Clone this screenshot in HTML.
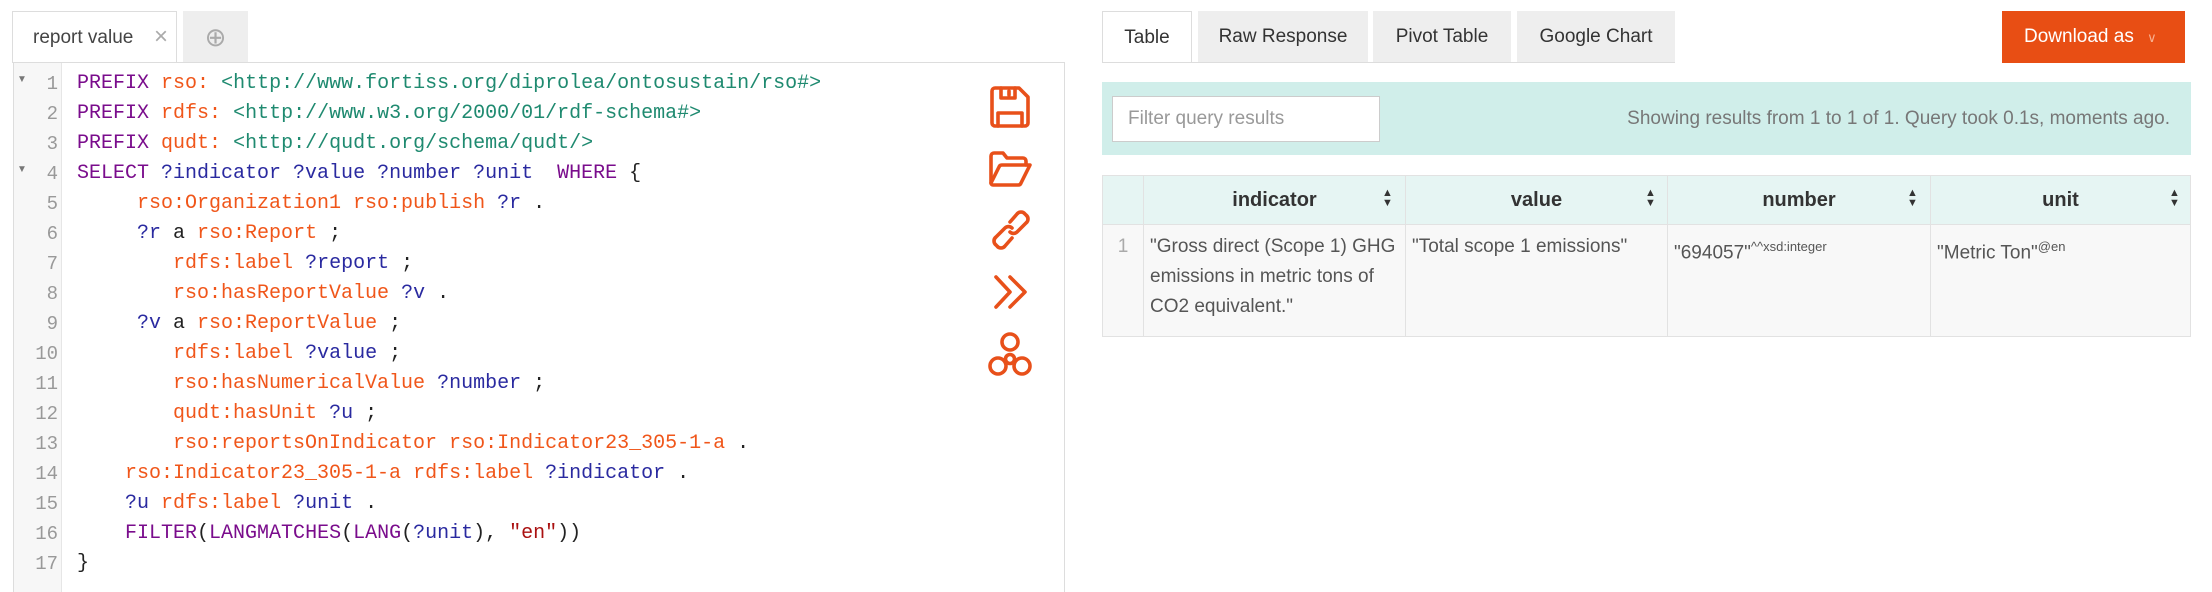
<!DOCTYPE html>
<html><head><meta charset="utf-8"><style>
*{box-sizing:border-box;margin:0;padding:0}
body{width:2212px;height:580px;background:#fff;position:relative;overflow:hidden;font-family:"Liberation Sans",sans-serif;color:#333}
.abs{position:absolute}
.tab{position:absolute;top:11px;height:52px;font-size:19px;line-height:52px;text-align:center}
.code{position:absolute;left:13px;top:62px;width:1052px;height:530px;border:1px solid #ddd;border-bottom:none}
.gut{position:absolute;left:0;top:0;width:48px;height:100%;background:#f7f7f7;border-right:1px solid #e6e6e6}
.ln{position:absolute;left:0;width:44px;text-align:right;font-family:"Liberation Mono",monospace;font-size:19px;color:#999;height:30px;line-height:30px}
.cl{position:absolute;left:63px;font-family:"Liberation Mono",monospace;font-size:20px;height:30px;line-height:30px;white-space:pre;color:#222}
.k{color:#7a0c8c}.p{color:#f0561a}.u{color:#1f8a70}.v{color:#2a2aa0}.s{color:#a11}
.fold{position:absolute;left:3px;font-size:10px;color:#777}
svg.i{position:absolute;fill:none;stroke:#e8501a;stroke-width:3.6;stroke-linecap:round;stroke-linejoin:round}
th,td{border:1px solid #e2e2e2}
.so{position:absolute;top:188px;font-size:11px;line-height:10px;color:#333}
</style></head><body>
<div class="tab" style="left:12px;width:165px;border:1px solid #ddd;border-bottom:none;background:#fff;color:#444;text-align:left;padding-left:20px">report value <span style="color:#aaa;font-size:24px;position:absolute;right:8px;top:-1px">×</span></div>
<div class="tab" style="left:183px;width:65px;background:#eee;color:#aaa;font-size:26px">⊕</div>
<div class="code">
<div class="gut"></div>
<div class="fold" style="top:11px">▼</div><div class="fold" style="top:101px">▼</div>
<div class="ln" style="top:6px">1</div><div class="ln" style="top:36px">2</div><div class="ln" style="top:66px">3</div><div class="ln" style="top:96px">4</div><div class="ln" style="top:126px">5</div><div class="ln" style="top:156px">6</div><div class="ln" style="top:186px">7</div><div class="ln" style="top:216px">8</div><div class="ln" style="top:246px">9</div><div class="ln" style="top:276px">10</div><div class="ln" style="top:306px">11</div><div class="ln" style="top:336px">12</div><div class="ln" style="top:366px">13</div><div class="ln" style="top:396px">14</div><div class="ln" style="top:426px">15</div><div class="ln" style="top:456px">16</div><div class="ln" style="top:486px">17</div>
<div class="cl" style="top:6px"><span class="k">PREFIX</span> <span class="p">rso:</span> <span class="u">&lt;http://www.fortiss.org/diprolea/ontosustain/rso#&gt;</span></div>
<div class="cl" style="top:36px"><span class="k">PREFIX</span> <span class="p">rdfs:</span> <span class="u">&lt;http://www.w3.org/2000/01/rdf-schema#&gt;</span></div>
<div class="cl" style="top:66px"><span class="k">PREFIX</span> <span class="p">qudt:</span> <span class="u">&lt;http://qudt.org/schema/qudt/&gt;</span></div>
<div class="cl" style="top:96px"><span class="k">SELECT</span> <span class="v">?indicator ?value ?number ?unit</span>  <span class="k">WHERE</span> {</div>
<div class="cl" style="top:126px">     <span class="p">rso:Organization1 rso:publish</span> <span class="v">?r</span> .</div>
<div class="cl" style="top:156px">     <span class="v">?r</span> a <span class="p">rso:Report</span> ;</div>
<div class="cl" style="top:186px">        <span class="p">rdfs:label</span> <span class="v">?report</span> ;</div>
<div class="cl" style="top:216px">        <span class="p">rso:hasReportValue</span> <span class="v">?v</span> .</div>
<div class="cl" style="top:246px">     <span class="v">?v</span> a <span class="p">rso:ReportValue</span> ;</div>
<div class="cl" style="top:276px">        <span class="p">rdfs:label</span> <span class="v">?value</span> ;</div>
<div class="cl" style="top:306px">        <span class="p">rso:hasNumericalValue</span> <span class="v">?number</span> ;</div>
<div class="cl" style="top:336px">        <span class="p">qudt:hasUnit</span> <span class="v">?u</span> ;</div>
<div class="cl" style="top:366px">        <span class="p">rso:reportsOnIndicator rso:Indicator23_305-1-a</span> .</div>
<div class="cl" style="top:396px">    <span class="p">rso:Indicator23_305-1-a rdfs:label</span> <span class="v">?indicator</span> .</div>
<div class="cl" style="top:426px">    <span class="v">?u</span> <span class="p">rdfs:label</span> <span class="v">?unit</span> .</div>
<div class="cl" style="top:456px">    <span class="k">FILTER</span>(<span class="k">LANGMATCHES</span>(<span class="k">LANG</span>(<span class="v">?unit</span>), <span class="s">"en"</span>))</div>
<div class="cl" style="top:486px">}</div>
</div>
<svg class="i" style="left:988px;top:85px" width="44" height="44" viewBox="0 0 44 44"><path d="M4 6a3 3 0 0 1 3-3h24l9 9v26a3 3 0 0 1-3 3H7a3 3 0 0 1-3-3z"/><path d="M13 3v10h14V3M21 6v4M10 41V28h24v13"/></svg>
<svg class="i" style="left:988px;top:150px" width="46" height="38" viewBox="0 0 46 38"><path d="M3 33V6a3 3 0 0 1 3-3h9l4 5h16a3 3 0 0 1 3 3v4"/><path d="M3 33l8-16a3 3 0 0 1 3-2h28l-9 18a3 3 0 0 1-3 2H5a2 2 0 0 1-2-2z"/></svg>
<svg class="i" style="left:990px;top:208px" width="42" height="44" viewBox="0 0 42 44"><path d="M20 14l7-8a5 5 0 0 1 8 0l1 1a5 5 0 0 1 0 8l-9 9a5 5 0 0 1-7 0"/><path d="M22 30l-7 8a5 5 0 0 1-8 0l-1-1a5 5 0 0 1 0-8l9-9a5 5 0 0 1 7 0"/></svg>
<svg class="i" style="left:992px;top:274px" width="38" height="38" viewBox="0 0 38 38"><path d="M4 3l14 15L4 33M18 3l15 15L18 33"/></svg>
<svg class="i" style="left:987px;top:331px" width="46" height="48" viewBox="0 0 46 48"><circle cx="23" cy="11" r="8"/><circle cx="11" cy="35" r="8"/><circle cx="35" cy="35" r="8"/><circle cx="23" cy="28" r="4.5"/></svg>

<div class="tab" style="left:1102px;width:90px;border:1px solid #ddd;border-bottom:none;background:#fff">Table</div>
<div class="tab" style="left:1198px;width:170px;background:#eee">Raw Response</div>
<div class="tab" style="left:1373px;width:138px;background:#eee">Pivot Table</div>
<div class="tab" style="left:1517px;width:158px;background:#eee">Google Chart</div>
<div class="abs" style="left:1102px;top:62px;width:573px;height:1px;background:#ddd"></div>
<div class="tab" style="left:2002px;width:183px;background:#e84e14;color:#fff;font-size:19px;text-align:left;padding-left:22px">Download as <span style="font-size:13px;color:#f8b090;margin-left:8px">∨</span></div>
<div class="abs" style="left:1102px;top:82px;width:1089px;height:73px;background:#d0eeea"></div>
<div class="abs" style="left:1112px;top:96px;width:268px;height:46px;background:#fff;border:1px solid #ccc;font-size:19px;color:#999;line-height:44px;padding-left:15px">Filter query results</div>
<div class="abs" style="right:42px;top:96px;height:46px;line-height:46px;font-size:19px;color:#777">Showing results from 1 to 1 of 1. Query took 0.1s, moments ago.</div>
<table class="abs" style="left:1102px;top:175px;width:1089px;border-collapse:collapse;font-size:19px;table-layout:fixed">
<tr style="height:49px;background:#e6f5f3;color:#333;font-size:20px">
<th style="width:41px"></th>
<th style="width:262px">indicator</th>
<th style="width:262px">value</th>
<th style="width:263px">number</th>
<th>unit</th></tr>
<tr style="height:112px;background:#f8f8f8;vertical-align:top;color:#555;line-height:30px">
<td style="color:#aaa;text-align:center;padding-top:7px">1</td>
<td style="padding:7px 6px">"Gross direct (Scope 1) GHG emissions in metric tons of CO2 equivalent."</td>
<td style="padding:7px 6px">"Total scope 1 emissions"</td>
<td style="padding:7px 6px">"694057"<sup style="font-size:13px">^^xsd:integer</sup></td>
<td style="padding:7px 6px">"Metric Ton"<sup style="font-size:13px">@en</sup></td></tr>
</table>
<div class="so" style="left:1382px">▲<br>▼</div>
<div class="so" style="left:1645px">▲<br>▼</div>
<div class="so" style="left:1907px">▲<br>▼</div>
<div class="so" style="left:2169px">▲<br>▼</div>
</body></html>
